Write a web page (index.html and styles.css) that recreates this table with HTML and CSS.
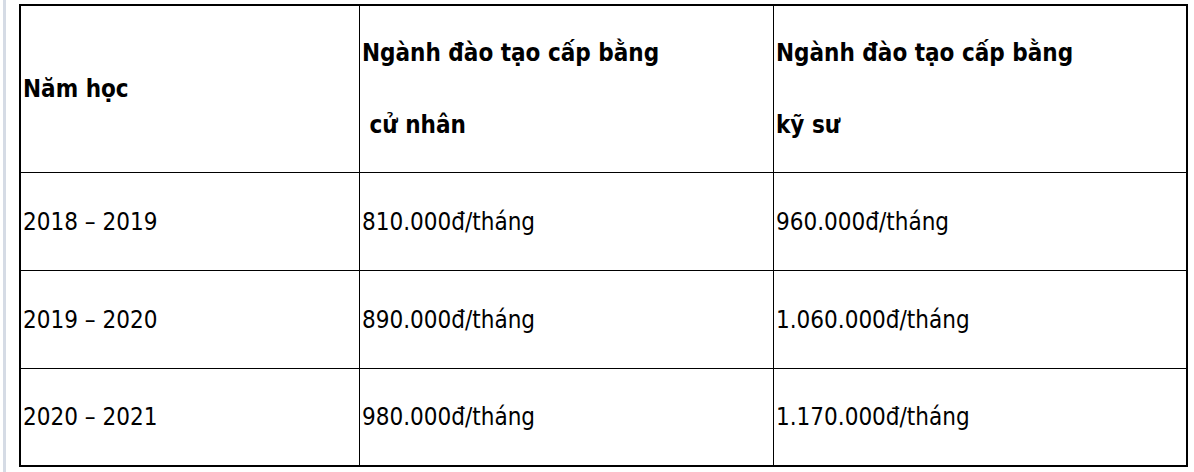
FILE: index.html
```html
<!DOCTYPE html>
<html lang="vi">
<head>
<meta charset="utf-8">
<link rel="stylesheet" href="styles.css">
</head>
<body>
<div class="page">
  <div class="strip"></div>
  <table class="fees">
    <colgroup>
      <col class="c1">
      <col class="c2">
      <col class="c3">
    </colgroup>
    <tr class="head">
      <td><div class="hl">Năm học</div></td>
      <td><div class="hl">Ngành đào tạo cấp bằng</div><div class="hl gap">&nbsp;cử nhân</div></td>
      <td class="last"><div class="hl">Ngành đào tạo cấp bằng</div><div class="hl gap">kỹ sư</div></td>
    </tr>
    <tr class="row">
      <td>2018 – 2019</td>
      <td>810.000đ/tháng</td>
      <td class="last">960.000đ/tháng</td>
    </tr>
    <tr class="row">
      <td>2019 – 2020</td>
      <td>890.000đ/tháng</td>
      <td class="last">1.060.000đ/tháng</td>
    </tr>
    <tr class="row end">
      <td>2020 – 2021</td>
      <td>980.000đ/tháng</td>
      <td class="last">1.170.000đ/tháng</td>
    </tr>
  </table>
</div>
</body>
</html>
```
FILE: styles.css
```css
html, body {
  margin: 0;
  padding: 0;
  background: #ffffff;
}
.page {
  display: flex;
  align-items: flex-start;
  height: 472px;
  overflow: hidden;
}
.strip {
  width: 3px;
  height: 472px;
  margin-left: 3px;
  background: #d5dbe5;
  flex: none;
}
.fees {
  margin-left: 13px;
  margin-top: 4px;
  width: 1169px;
  table-layout: fixed;
  border-collapse: separate;
  border-spacing: 0;
  border: 2px solid #000;
  font-family: "DejaVu Sans Condensed", "DejaVu Sans", sans-serif;
  font-size: 24px;
  color: #000;
  flex: none;
}
.c1 { width: 339px; }
.c2 { width: 414px; }
.c3 { width: 412px; }
.fees td {
  padding: 0 1px 0 2px;
  border-right: 1px solid #000;
  border-bottom: 1px solid #000;
  vertical-align: middle;
  white-space: nowrap;
}
.fees td.last { border-right: none; }
.fees tr.end td { border-bottom: none; }
.head td {
  height: 166px;
  font-weight: bold;
}
.row td { height: 97px; }
.row.end td { height: 96px; }
.hl {
  line-height: 36px;
}
.hl.gap {
  margin-top: 36px;
}
.dash {
  letter-spacing: 0;
}
```
